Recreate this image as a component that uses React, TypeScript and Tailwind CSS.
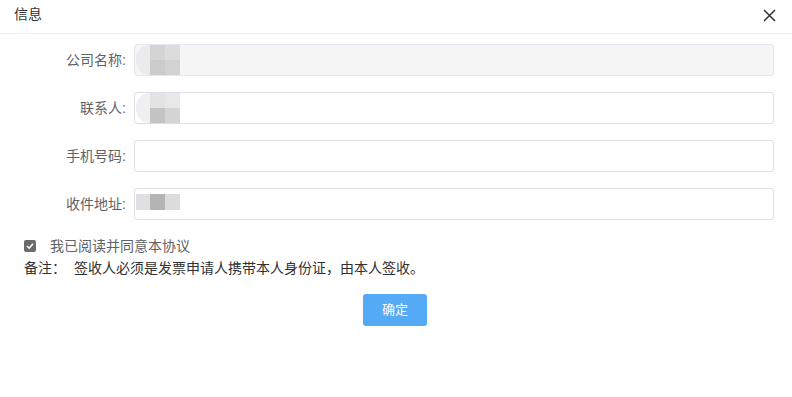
import { ReactNode } from "react";

const font = { fontFamily: '"Liberation Sans", "Noto Sans CJK SC", sans-serif' };

function Row({ label, disabled, children }: { label: string; disabled?: boolean; children?: ReactNode }) {
  return (
    <div className="flex items-center h-8">
      <div className="w-[126px] shrink-0 text-right text-[14px] text-[#606266]">{label}:</div>
      <div
        className={`relative ml-[8px] w-[640px] h-8 rounded-[3px] border border-[#dcdfe6] overflow-hidden ${
          disabled ? "bg-[#f5f5f5] border-[#e4e7ed]" : "bg-white"
        }`}
      >
        {children}
      </div>
    </div>
  );
}

export default function App() {
  return (
    <div className="w-[792px] h-[397px] bg-white text-[#303133]" style={font}>
      {/* header */}
      <div className="flex items-center justify-between h-[34px] border-b border-[#ebeef5] pl-[14px] pr-[16px]">
        <span className="text-[14px] text-[#303133] mb-[4px]">信息</span>
        <svg width="13" height="13" viewBox="0 0 13 13" className="mb-[2px]">
          <path d="M1 1 L12 12 M12 1 L1 12" stroke="#303133" strokeWidth="1.5" />
        </svg>
      </div>

      <div className="flex flex-col gap-4 mt-[10px]">
        <Row label="公司名称" disabled>
          <div className="absolute left-[1px] top-0 flex h-full">
            <div className="w-[14px] h-full rounded-l-full bg-[#ebebeb]" />
            <div className="flex flex-col w-[15px]">
              <div className="flex-1 bg-[#d4d4d4]" />
              <div className="flex-1 bg-[#cbcbcb]" />
            </div>
            <div className="flex flex-col w-[15px]">
              <div className="flex-1 bg-[#dcdcdc]" />
              <div className="flex-1 bg-[#d2d2d2]" />
            </div>
          </div>
        </Row>
        <Row label="联系人">
          <div className="absolute left-[1px] top-0 flex h-full">
            <div className="w-[14px] h-full rounded-l-full bg-[#f0f0f0]" />
            <div className="flex flex-col w-[15px]">
              <div className="flex-1 bg-[#e3e3e3]" />
              <div className="flex-1 bg-[#c4c4c4]" />
            </div>
            <div className="flex flex-col w-[15px]">
              <div className="flex-1 bg-[#e8e8e8]" />
              <div className="flex-1 bg-[#d4d4d4]" />
            </div>
          </div>
        </Row>
        <Row label="手机号码" />
        <Row label="收件地址">
          <div className="absolute left-[1px] top-[5px] flex h-[16px]">
            <div className="w-[14px] bg-[#e0e0e0]" />
            <div className="w-[15px] bg-[#b4b4b4]" />
            <div className="w-[15px] bg-[#dcdcdc]" />
          </div>
        </Row>
      </div>

      <div className="mt-[19px] pl-[24px] flex items-center h-[14px]">
        <div className="w-3 h-3 rounded-[2px] bg-[#6b6b6b] flex items-center justify-center">
          <svg width="8" height="8" viewBox="0 0 8 8">
            <path d="M1 4 L3.2 6.2 L7 1.8" fill="none" stroke="white" strokeWidth="1.6" />
          </svg>
        </div>
        <span className="ml-[14px] text-[14px] text-[#606266]">我已阅读并同意本协议</span>
      </div>

      <div className="mt-[5px] pl-[24px] flex text-[14px] text-[#303133]">
        <span>备注：</span>
        <span className="ml-[8px]">签收人必须是发票申请人携带本人身份证，由本人签收。</span>
      </div>

      <div className="flex justify-center mt-[15px]">
        <button className="w-16 h-8 rounded-[3px] bg-[#55aaf5] text-white text-[13px] ml-[-2px]">确定</button>
      </div>
    </div>
  );
}
